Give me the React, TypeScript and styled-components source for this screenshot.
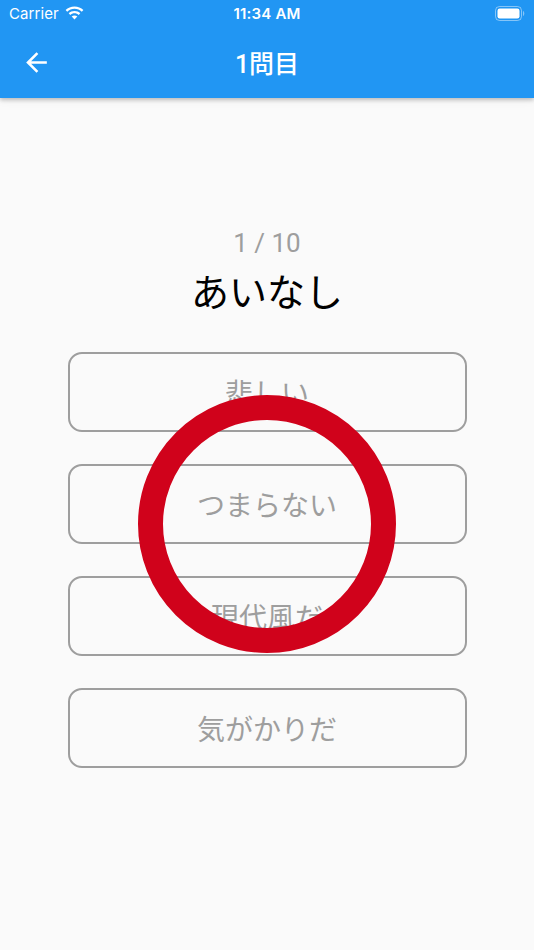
import React from "react";
import styled, { createGlobalStyle } from "styled-components";

const GlobalStyle = createGlobalStyle`
  html, body {
    margin: 0;
    padding: 0;
    background: #fafafa;
  }
  body {
    font-family: "Roboto", "Noto Sans CJK JP", sans-serif;
  }
`;

const Screen = styled.div`
  position: relative;
  width: 534px;
  min-height: 950px;
  background: #fafafa;
  overflow: hidden;
`;

const Header = styled.header`
  background: #2196f3;
  color: #fff;
  box-shadow: 0 2px 4px rgba(0, 0, 0, 0.22), 0 1px 10px rgba(0, 0, 0, 0.08);
  position: relative;
  z-index: 1;
`;

const StatusBar = styled.div`
  height: 26px;
  display: grid;
  grid-template-columns: 1fr auto 1fr;
  align-items: center;
  padding: 0 9px;
  font-family: "Inter", "Liberation Sans", sans-serif;
  font-size: 15px;
`;

const Carrier = styled.div`
  display: flex;
  align-items: center;
  gap: 6px;
  letter-spacing: 0.1px;
`;

const Clock = styled.div`
  font-weight: 600;
  letter-spacing: 0.2px;
`;

const BatteryWrap = styled.div`
  display: flex;
  justify-content: flex-end;
  padding-right: 0;
`;

const AppBar = styled.div`
  height: 72px;
  display: flex;
  align-items: center;
  position: relative;
`;

const BackButton = styled.button`
  background: none;
  border: none;
  padding: 0;
  margin-left: 20px;
  width: 32px;
  height: 32px;
  display: flex;
  align-items: center;
  justify-content: center;
  color: #fff;
  cursor: pointer;
`;

const Title = styled.h1`
  position: absolute;
  left: 0;
  right: 0;
  margin: 0;
  text-align: center;
  font-size: 25px;
  font-weight: 500;
  pointer-events: none;
`;

const Content = styled.main`
  display: flex;
  flex-direction: column;
  align-items: center;
  padding-top: 130px;
`;

const Counter = styled.div`
  font-size: 26px;
  line-height: 30px;
  color: #9e9e9e;
`;

const Word = styled.div`
  margin-top: 13px;
  font-size: 38px;
  line-height: 44px;
  color: #000;
`;

const Choices = styled.div`
  margin-top: 37px;
  display: flex;
  flex-direction: column;
  gap: 32px;
`;

const Choice = styled.button`
  width: 399px;
  height: 80px;
  box-sizing: border-box;
  border: 2px solid #9e9e9e;
  border-radius: 14px;
  background: transparent;
  color: #9e9e9e;
  font-family: "Noto Sans CJK JP", sans-serif;
  font-size: 28px;
  display: flex;
  align-items: center;
  justify-content: center;
  padding: 0;
`;

const Mark = styled.div`
  position: absolute;
  left: 138px;
  top: 395px;
  width: 258px;
  height: 258px;
  box-sizing: border-box;
  border: 25px solid #d0021b;
  border-radius: 50%;
  pointer-events: none;
`;

function WifiIcon() {
  return (
    <svg width="19" height="14" viewBox="0 0 19 14" fill="#fff">
      <path d="M9.5 0.5C6 0.5 2.9 1.8 0.6 4l1.6 1.7C4.1 3.9 6.7 2.8 9.5 2.8s5.4 1.1 7.3 2.9L18.4 4C16.1 1.8 13 0.5 9.5 0.5z" />
      <path d="M9.5 5c-2.3 0-4.3 0.9-5.8 2.3l1.6 1.7C6.4 7.9 7.9 7.3 9.5 7.3s3.1 0.6 4.2 1.7l1.6-1.7C13.8 5.9 11.8 5 9.5 5z" />
      <path d="M9.5 9.5c-1.1 0-2.1 0.4-2.8 1.1L9.5 13.5l2.8-2.9C11.6 9.9 10.6 9.5 9.5 9.5z" />
    </svg>
  );
}

function BatteryIcon() {
  return (
    <svg width="30" height="15" viewBox="0 0 30 15">
      <rect x="0.5" y="0.5" width="26" height="14" rx="4" fill="none" stroke="rgba(255,255,255,0.45)" />
      <rect x="2.5" y="2.5" width="22" height="10" rx="2.2" fill="#fff" />
      <path d="M28 5v5c0.8-0.3 1.3-1.4 1.3-2.5S28.8 5.3 28 5z" fill="rgba(255,255,255,0.45)" />
    </svg>
  );
}

function ArrowBack() {
  return (
    <svg width="31" height="31" viewBox="0 0 24 24" fill="#fff">
      <path d="M20 11H7.83l5.59-5.59L12 4l-8 8 8 8 1.41-1.41L7.83 13H20v-2z" />
    </svg>
  );
}

const choices = ["悲しい", "つまらない", "現代風だ", "気がかりだ"];

export default function App() {
  return (
    <>
      <GlobalStyle />
      <Screen>
        <Header>
          <StatusBar>
            <Carrier>
              Carrier
              <WifiIcon />
            </Carrier>
            <Clock>11:34 AM</Clock>
            <BatteryWrap>
              <BatteryIcon />
            </BatteryWrap>
          </StatusBar>
          <AppBar>
            <BackButton aria-label="back">
              <ArrowBack />
            </BackButton>
            <Title>1問目</Title>
          </AppBar>
        </Header>
        <Content>
          <Counter>1 / 10</Counter>
          <Word>あいなし</Word>
          <Choices>
            {choices.map((c) => (
              <Choice key={c}>{c}</Choice>
            ))}
          </Choices>
        </Content>
        <Mark />
      </Screen>
    </>
  );
}
